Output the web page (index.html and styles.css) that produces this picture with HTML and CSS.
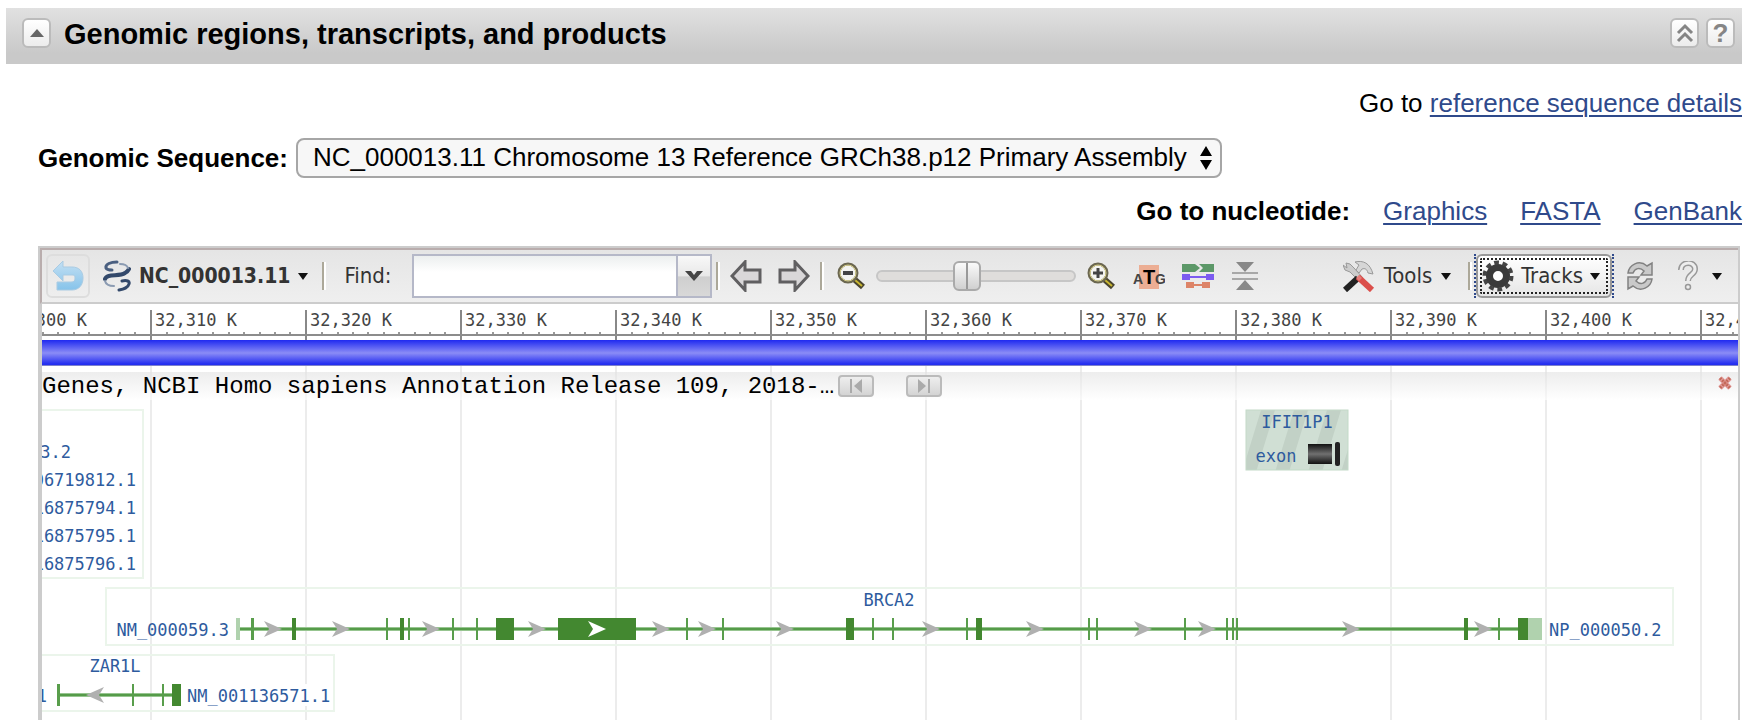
FILE: index.html
```html
<!DOCTYPE html>
<html lang="en">
<head>
<meta charset="utf-8">
<title>Genomic regions, transcripts, and products</title>
<link rel="stylesheet" href="styles.css">
</head>
<body>
<header class="section-head">
  <button class="head-btn" type="button" aria-label="Collapse section"><svg width="16" height="10" viewBox="0 0 16 10"><path d="M8 1 15 9H1z" fill="#666"/></svg></button>
  <h1 class="section-title">Genomic regions, transcripts, and products</h1>
  <button class="head-btn" type="button" aria-label="Back to top"><svg width="18" height="20" viewBox="0 0 18 20" fill="none" stroke="#858585" stroke-width="3"><path d="M2 10 9 3l7 7M2 18l7-7 7 7"/></svg></button>
  <button class="head-btn head-help" type="button" aria-label="Help">?</button>
</header>

<main class="section-body">
  <p class="details">Go to <a href="#details">reference sequence details</a></p>
  <div class="sequence">
    <label class="strong" for="seq">Genomic Sequence:</label>
    <span class="select-wrap">
      <select id="seq" class="select"><option>NC_000013.11 Chromosome 13 Reference GRCh38.p12 Primary Assembly</option></select>
      <svg class="select-arrows" width="12" height="24" viewBox="0 0 12 24"><path d="M6 0 12 10H0zM6 24 0 14h12z"/></svg>
    </span>
  </div>
  <nav class="nucleotide">
    <span class="strong">Go to nucleotide:</span>
    <a href="#graphics">Graphics</a>
    <a href="#fasta">FASTA</a>
    <a href="#genbank">GenBank</a>
  </nav>

  <section class="viewer" aria-label="Sequence viewer">
    <div class="toolbar">
      <button class="tool back" type="button" aria-label="Back">
        <svg width="32" height="32" viewBox="0 0 32 32"><defs><linearGradient id="bk" x2="0" y2="1"><stop stop-color="#c4e0f3"/><stop offset="1" stop-color="#86c3ea"/></linearGradient></defs><path d="M1 11 11 1v6h9c7 0 11 4 11 11s-4 12-11 12H5v-8h14c3 0 4-1 4-4s-1-3-4-3h-8v6z" fill="url(#bk)" stroke="#a9cbe3"/></svg>
      </button>
      <button class="tool seq-id" type="button">
        <svg width="28" height="32" viewBox="0 0 28 32" fill="none" stroke-linecap="round"><path d="M14 2C8 2 2 4 3 8c1 2 3 2 6 2" stroke="#4a5f80" stroke-width="3"/><path d="M2 19c2-6 14-2 20-6 2-1 3-2 4-4" stroke="#33496b" stroke-width="4"/><path d="M17 4c4 0 7 1 8 4M2 21c1 4 5 5 9 5" stroke="#8b9bb2" stroke-width="2"/><path d="M19 21c5-1 8 0 7 3-1 4-5 5-10 6" stroke="#33496b" stroke-width="3"/></svg>
        <b class="seq-name">NC_000013.11</b><i class="caret"></i>
      </button>
      <i class="sep"></i>
      <label class="find-label" for="find">Find:</label>
      <span class="combo">
        <input id="find" class="find" type="text">
        <button class="combo-btn" type="button" aria-label="Show choices"><svg width="18" height="12" viewBox="0 0 18 12"><path d="M0 1h6l3 4 3-4h6L9 11z" fill="#444"/></svg></button>
      </span>
      <i class="sep near"></i>
      <button class="tool pan" type="button" aria-label="Pan left"><svg width="32" height="32" viewBox="0 0 32 32"><path d="M2 16 15 2v8h15v12H15v8z" fill="#d9d7d9" stroke="#605f61" stroke-width="3"/></svg></button>
      <button class="tool pan" type="button" aria-label="Pan right"><svg width="32" height="32" viewBox="0 0 32 32"><path d="M30 16 17 2v8H2v12h15v8z" fill="#d9d7d9" stroke="#605f61" stroke-width="3"/></svg></button>
      <i class="sep near"></i>
      <button class="tool zoom-out" type="button" aria-label="Zoom out"><svg width="30" height="30" viewBox="0 0 30 30"><path d="m18 18 9 8" stroke="#4a4530" stroke-width="6"/><path d="m19 19 7 6" stroke="#c9b730" stroke-width="2"/><circle cx="12" cy="12" r="9" fill="#f4f4f0" stroke="#6b6750" stroke-width="3"/><circle cx="12" cy="12" r="8" fill="none" stroke="#d8d08a"/><path d="M7 12h10" stroke="#444" stroke-width="4"/></svg></button>
      <input class="zoom" type="range" min="0" max="100" value="45" aria-label="Zoom level">
      <button class="tool zoom-in" type="button" aria-label="Zoom in"><svg width="30" height="30" viewBox="0 0 30 30"><path d="m18 18 9 8" stroke="#4a4530" stroke-width="6"/><path d="m19 19 7 6" stroke="#c9b730" stroke-width="2"/><circle cx="12" cy="12" r="9" fill="#f4f4f0" stroke="#6b6750" stroke-width="3"/><circle cx="12" cy="12" r="8" fill="none" stroke="#d8d08a"/><path d="M7 12h10M12 7v10" stroke="#444" stroke-width="3"/></svg></button>
      <button class="tool" type="button" aria-label="Zoom to sequence"><svg class="atg" width="32" height="32" viewBox="0 0 32 32"><path d="M6 5h20v24H6z" fill="#ecae94"/><text x="0" y="24">A</text><text class="atg-mid" x="10" y="24">T</text><text x="22" y="24">G</text></svg></button>
      <button class="tool" type="button" aria-label="Show tracks"><svg width="32" height="32" viewBox="0 0 32 32"><path d="M0 4h13l5 4-5 4H0zM17 4h15v8H17l4-4z" fill="#5c9868"/><path d="M0 14h8v2h16v-2h8v6h-8v-2H8v2H0z" fill="#7c5cf0"/><path d="M4 22h8v2h8v-2h8v6h-8v-2h-8v2H4z" fill="#dd8468"/></svg></button>
      <button class="tool" type="button" aria-label="Flip strands"><svg width="28" height="30" viewBox="0 0 28 30"><path d="M5 1h18l-9 10zM14 19l9 10H5z" fill="#888"/><path d="M1 12h26M1 18h26" stroke="#a8a8a8" stroke-width="2"/></svg></button>
      <span class="fill"></span>
      <button class="tool tools" type="button">
        <svg width="32" height="32" viewBox="0 0 32 32"><path d="M12 2c8-2 15 1 18 12l-5-1c-1-4-3-5-6-4l-3 4-3-3 3-5z" fill="#d6d6d6" stroke="#999"/><path d="m3 3 4 1 4 4 9 10-4 3-9-9-5-2-2-5 4 3z" fill="#ccc" stroke="#999"/><path d="m15 18-13 12" stroke="#222" stroke-width="6"/><path d="m15 17 14 13" stroke="#db4e4a" stroke-width="6"/><path d="m13 18 3-3 3 3-3 3z" fill="#e57b78"/></svg>
        Tools<i class="caret"></i>
      </button>
      <i class="sep"></i>
      <span class="tracks-focus"><button class="tracks-btn" type="button">
        <svg width="32" height="32" viewBox="0 0 32 32"><circle cx="16" cy="16" r="13.500" fill="none" stroke="#444" stroke-width="4" stroke-dasharray="4.800 3.680"/><circle cx="16" cy="16" r="8.500" fill="#fff" stroke="#3a3a3a" stroke-width="7"/></svg>
        Tracks<i class="caret"></i>
      </button></span>
      <button class="tool refresh" type="button" aria-label="Reload"><svg width="28" height="30" viewBox="0 0 28 30" fill="#c9c9c9" stroke="#818181" stroke-width="1.500"><path d="M2 12C3 4 13-2 21 5l5-3v12H15l3-4C14 6 9 7 7 12z"/><path d="M26 18c-1 8-11 14-19 7l-5 3V16h11l-3 4c4 4 9 3 11-2z"/></svg></button>
      <button class="tool help" type="button" aria-label="Help"><svg width="20" height="30" viewBox="0 0 20 30"><path d="M3 9C3 0 17 0 17 8c0 6-7 5-7 12" fill="none" stroke="#999" stroke-width="6"/><path d="M3 9C3 0 17 0 17 8c0 6-7 5-7 12" fill="none" stroke="#eee" stroke-width="3"/><circle cx="10" cy="26" r="2.500" fill="#eee" stroke="#999" stroke-width="1.500"/></svg><i class="caret"></i></button>
    </div>

    <svg class="ruler" width="100%" height="36">
      <defs><pattern id="ticks" x="108" width="155" height="36" patternUnits="userSpaceOnUse"><path d="M1 6v30" stroke="#888" stroke-width="2"/><path d="M17 28v3M33 28v3M48 28v3M63 28v3M79 28v3M94 28v3M110 28v3M125 28v3M140 28v3" stroke="#999" stroke-width="2"/></pattern></defs>
      <rect width="100%" height="36" fill="url(#ticks)"/>
      <rect y="30" width="100%" height="2" fill="#8c8c8c"/>
      <text x="45" y="22" text-anchor="end">32,300 K</text>
      <text x="113" y="22">32,310 K</text><text x="268" y="22">32,320 K</text><text x="423" y="22">32,330 K</text><text x="578" y="22">32,340 K</text><text x="733" y="22">32,350 K</text><text x="888" y="22">32,360 K</text><text x="1043" y="22">32,370 K</text><text x="1198" y="22">32,380 K</text><text x="1353" y="22">32,390 K</text><text x="1508" y="22">32,400 K</text><text x="1663" y="22">32,410 K</text>
    </svg>
    <div class="sequence-bar"></div>

    <div class="tracks">
      <div class="track-head">
        <span class="track-name">Genes, NCBI Homo sapiens Annotation Release 109, 2018-…</span>
        <button class="step" type="button" aria-label="Previous gene"><svg width="16" height="16" viewBox="0 0 16 16"><path d="M3 1v14" stroke="#aaa" stroke-width="2"/><path d="M14 1v14L6 8z" fill="#aaa"/></svg></button>
        <button class="step" type="button" aria-label="Next gene"><svg width="16" height="16" viewBox="0 0 16 16"><path d="M13 1v14" stroke="#aaa" stroke-width="2"/><path d="M2 1v14l8-7z" fill="#aaa"/></svg></button>
        <button class="remove" type="button" aria-label="Remove track"><svg width="14" height="14" viewBox="0 0 14 14"><path d="m2 2 10 10M12 2 2 12" stroke="#e3a0a0" stroke-width="5"/><path d="m2 2 10 10M12 2 2 12" stroke="#c56a5a" stroke-width="3" stroke-dasharray="2 1"/></svg></button>
      </div>
      <svg class="genes" width="100%" height="320">
        <defs>
          <path id="fwd" d="M0-8 18 0 0 8l5-8z"/>
          <pattern id="hatch" width="33" height="60" patternUnits="userSpaceOnUse" patternTransform="translate(1242 410) skewX(-17)"><rect width="33" height="60" fill="#d0dfd4"/><rect x="19" width="16" height="60" fill="#c2d1c6"/></pattern>
          <linearGradient id="blk" x2="0" y2="1"><stop stop-color="#111"/><stop offset=".5" stop-color="#707070"/><stop offset="1" stop-color="#111"/></linearGradient>
        </defs>
        <g transform="translate(-42 -400)">
          <g fill="none" stroke="#ebf5eb" stroke-width="2">
            <rect x="30" y="410" width="113" height="168"/>
            <rect x="106" y="588" width="1567" height="57"/>
            <rect x="30" y="655" width="304" height="56"/>
          </g>
          <rect x="188" y="684" width="140" height="22" fill="#fff"/>
          <rect x="1246" y="410" width="102" height="60" fill="url(#hatch)" stroke="#c3dac8"/>
          <rect x="1308" y="444" width="24" height="20" fill="url(#blk)"/>
          <rect x="1335" y="442" width="5" height="24" rx="2" fill="#222"/>
          <g class="labels">
            <text x="71" y="458" text-anchor="end">33.2</text>
            <text x="136" y="486" text-anchor="end">006719812.1</text>
            <text x="136" y="514" text-anchor="end">16875794.1</text>
            <text x="136" y="542" text-anchor="end">16875795.1</text>
            <text x="136" y="570" text-anchor="end">16875796.1</text>
            <text x="229" y="636" text-anchor="end">NM_000059.3</text>
            <text x="889" y="606" text-anchor="middle">BRCA2</text>
            <text x="1549" y="636">NP_000050.2</text>
            <text x="115" y="672" text-anchor="middle">ZAR1L</text>
            <text x="47" y="702" text-anchor="end">1</text>
            <text x="187" y="702">NM_001136571.1</text>
            <text x="1297" y="428" text-anchor="middle">IFIT1P1</text>
            <text x="1276" y="462" text-anchor="middle">exon</text>
          </g>
          <g fill="#97c590"><rect x="238" y="627" width="1282" height="4"/><rect x="58" y="693" width="116" height="4"/></g>
          <g fill="#559b49"><rect x="238" y="628" width="1282" height="2"/><rect x="58" y="694" width="116" height="2"/></g>
          <path d="M236 618h4v22h-4zM1528 618h14v22h-14z" fill="#b0d2ae"/>
          <path fill="#599e4c" d="M251 618h3v22h-3zM386 618h2v22h-2zM408 618h2v22h-2zM452 618h2v22h-2zM476 618h2v22h-2zM686 618h2v22h-2zM722 618h2v22h-2zM872 618h2v22h-2zM892 618h2v22h-2zM966 618h2v22h-2zM1088 618h2v22h-2zM1096 618h2v22h-2zM1184 618h2v22h-2zM1226 618h2v22h-2zM1232 618h2v22h-2zM1236 618h2v22h-2zM1498 618h2v22h-2zM57 684h3v22h-3zM132 684h2v22h-2zM162 684h2v22h-2z"/>
          <path fill="#438830" d="M292 618h4v22h-4zM400 618h4v22h-4zM496 618h18v22h-18zM558 618h78v22h-78zM846 618h8v22h-8zM976 618h6v22h-6zM1464 618h4v22h-4zM1518 618h10v22h-10zM172 684h9v22h-9z"/>
          <g fill="#b0b0b0">
            <use href="#fwd" x="264" y="629"/><use href="#fwd" x="332" y="629"/><use href="#fwd" x="422" y="629"/><use href="#fwd" x="528" y="629"/><use href="#fwd" x="652" y="629"/><use href="#fwd" x="698" y="629"/><use href="#fwd" x="776" y="629"/><use href="#fwd" x="922" y="629"/><use href="#fwd" x="1026" y="629"/><use href="#fwd" x="1134" y="629"/><use href="#fwd" x="1198" y="629"/><use href="#fwd" x="1342" y="629"/><use href="#fwd" x="1474" y="629"/>
            <path d="m104 687-18 8 18 8-5-8z"/>
          </g>
          <use href="#fwd" x="588" y="629" fill="#fff"/>
        </g>
      </svg>
    </div>
  </section>
</main>
</body>
</html>
```
FILE: styles.css
```css
* { box-sizing: border-box; }
html { height: 100%; overflow: hidden; }
body {
  margin: 0;
  padding: 8px 8px 0 6px;
  height: 100%;
  overflow: hidden;
  background: #fff;
  color: #000;
  font: 26px/32px "Liberation Sans", Arial, sans-serif;
}
button, input, select { font: inherit; color: inherit; margin: 0; padding: 0; }
svg { display: block; flex: none; }
a { color: #2f4a8b; text-underline-offset: 3px; text-decoration-thickness: 2px; }
.strong { font-weight: bold; }

.section-head {
  display: flex;
  align-items: center;
  gap: 7px;
  height: 56px;
  padding: 0 7px 6px 16px;
  background: linear-gradient(#e1e1e1, #c9c9c9 80%);
}
.section-title { flex: 1; margin: 0; padding: 2px 0 0 6px; font-size: 29px; line-height: 32px; }
.head-btn {
  display: flex;
  align-items: center;
  justify-content: center;
  width: 29px;
  height: 30px;
  border: 2px solid #bbb;
  border-radius: 6px;
  background: linear-gradient(#fff, #ececec);
}
.head-help { color: #858585; font-weight: bold; }

.section-body { display: flex; flex-direction: column; padding-left: 32px; }
.details { margin: 23px 0 19px; text-align: right; }
.sequence { display: flex; align-items: center; gap: 8px; }
.select-wrap { position: relative; }
.select {
  display: block;
  height: 40px;
  padding: 0 31px 3px 15px;
  appearance: none;
  border: 2px solid #a6a6a6;
  border-radius: 8px;
  background: #f7f7f7;
}
.select-arrows { position: absolute; right: 10px; top: 8px; pointer-events: none; }
.nucleotide { display: flex; justify-content: flex-end; gap: 33px; margin: 17px 0 19px; }

.viewer {
  margin-right: 2px;
  border: 2px solid #ccc;
  border-bottom: 0;
  padding-left: 2px;
  background: linear-gradient(90deg, #ccc 2px, #fff 2px);
  overflow: hidden;
}
.toolbar {
  display: flex;
  align-items: center;
  height: 56px;
  margin-left: -2px;
  border: 2px solid #b9adad;
  border-right: 0;
  border-bottom-color: #ccc;
  padding: 0 16px 0 4px;
  background: linear-gradient(#e5e5e5, #efefef);
  color: #333;
  font: 22px/28px "DejaVu Sans Condensed", "Open Sans", sans-serif;
  overflow: hidden;
}
.tool {
  display: flex;
  align-items: center;
  flex: none;
  margin-right: 17px;
  border: 0;
  background: none;
}
.tool.back {
  justify-content: center;
  width: 44px;
  height: 44px;
  margin-right: 13px;
  border: 2px solid #ddd;
  border-radius: 6px;
}
.seq-id { gap: 8px; margin-right: 14px; }
.seq-name { font-size: 21px; font-weight: bold; }
.caret { flex: none; border: 5px solid transparent; border-top: 7px solid #111; border-bottom: 0; }
.sep { flex: none; width: 4px; height: 28px; border-left: 2px solid #aca899; border-right: 2px solid #fff; }
.find-label { margin: 0 20px 0 18px; }
.combo { display: flex; flex: 0 1 300px; min-width: 120px; height: 44px; }
.find {
  flex: 1;
  min-width: 0;
  border: 2px solid #b5b8c8;
  background: linear-gradient(#ecefef, #fff 40%);
  padding: 0 8px;
}
.combo-btn {
  display: flex;
  align-items: center;
  justify-content: center;
  width: 34px;
  border: 2px solid #b5b8c8;
  border-left: 0;
  background: linear-gradient(#f8f8f8, #e8e8e8 50%, #cfcfcf 52%, #d8d8d8);
}
.near { margin: 0 10px 0 4px; }
.pan { margin-right: 16px; }
.pan + .near { margin-left: -6px; margin-right: 12px; }
.zoom-out { margin-right: 10px; }
.zoom { flex: none; width: 200px; height: 30px; margin-right: 10px; appearance: none; background: none; }
.zoom::-webkit-slider-runnable-track {
  height: 12px;
  border: 2px solid #c6c6c6;
  border-radius: 6px;
  background: #dfdddb;
}
.zoom::-webkit-slider-thumb {
  appearance: none;
  width: 28px;
  height: 30px;
  margin-top: -11px;
  border: 2px solid #aaa;
  border-radius: 6px;
  background: linear-gradient(90deg, transparent 11px, #999 11px, #999 13px, transparent 13px), linear-gradient(#fafafa, #d0d0d0);
}
.atg { font: bold 14px "Liberation Sans", Arial, sans-serif; fill: #444; }
.atg-mid { font-size: 20px; fill: #000; }
.fill { flex: 1; }
.tools { gap: 9px; }
.tracks-focus {
  flex: none;
  margin: 0 12px 0 2px;
  border: 2px dotted #2f4a8b;
  border-width: 0 2px;
}
.tracks-btn {
  position: relative;
  display: flex;
  align-items: center;
  gap: 7px;
  height: 44px;
  padding: 0 10px 0 4px;
  border: 2px solid #999;
  border-radius: 6px;
  background: linear-gradient(#fff, #e6e6e6);
  outline: 2px dotted #222;
  outline-offset: -6px;
}
.refresh { margin-right: 24px; }
.help { gap: 14px; margin-right: 0; }

.ruler, .genes { font: 17px "DejaVu Sans Mono", monospace; }
.ruler { fill: #444; }
.sequence-bar { height: 26px; background: linear-gradient(#1f2af0, #8b8cf6 50%, #1f2af0 94%, #aab 100%); }
.tracks {
  padding-top: 6px;
  background: linear-gradient(90deg, #ececec 2px, transparent 2px) 108px 0 / 155px 100%;
}
.track-head {
  display: flex;
  align-items: center;
  height: 28px;
  padding-right: 6px;
  background: linear-gradient(rgba(225, 225, 225, .6), rgba(255, 255, 255, .6));
  font: 24px/28px "Liberation Mono", "Courier New", monospace;
}
.track-name { padding-top: 2px; margin-right: 4px; white-space: nowrap; overflow: hidden; }
.step {
  display: flex;
  align-items: center;
  justify-content: center;
  flex: none;
  width: 36px;
  height: 22px;
  margin-right: 32px;
  border: 2px solid #bbb;
  border-radius: 4px;
  background: linear-gradient(#eee, #d4d4d4);
}
.remove { align-self: flex-start; margin: 4px 0 0 auto; border: 0; background: none; }
.labels { fill: #2e5b9e; }
```
